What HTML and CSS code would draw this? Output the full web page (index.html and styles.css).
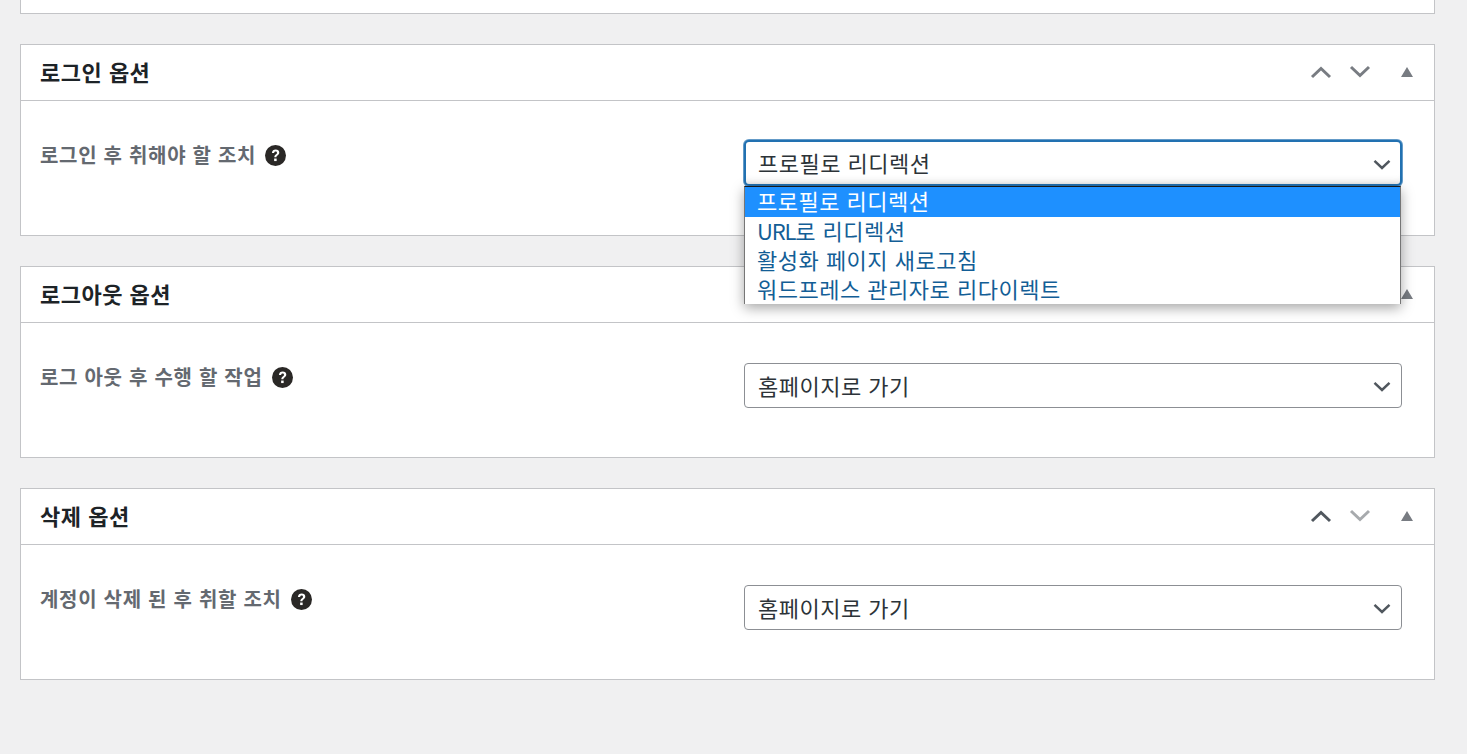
FILE: index.html
```html
<!DOCTYPE html>
<html lang="ko">
<head>
<meta charset="UTF-8" />
<title>옵션</title>
<link rel="stylesheet" href="styles.css">
</head>
<body>

<svg class="defs" width="0" height="0">
  <symbol id="up" viewBox="0 0 24 14"><path d="M3 12 L12 3.5 L21 12" fill="none" stroke="currentColor" stroke-width="3"/></symbol>
  <symbol id="down" viewBox="0 0 24 14"><path d="M3 2 L12 10.5 L21 2" fill="none" stroke="currentColor" stroke-width="3"/></symbol>
  <symbol id="tri" viewBox="0 0 12 10"><path d="M6 0 L12 10 L0 10 Z" fill="currentColor"/></symbol>
  <symbol id="help" viewBox="0 0 20 20">
    <circle cx="10" cy="10" r="10" fill="#2a2826"/>
    <path d="M6.6 7.6 C6.7 5.4 8.2 4.3 10.2 4.3 C12.2 4.3 13.6 5.5 13.6 7.2 C13.6 8.5 12.9 9.2 11.9 9.9 C11.1 10.5 10.9 10.8 10.9 11.7 L8.9 11.7 C8.9 10.3 9.3 9.7 10.3 9 C11.1 8.4 11.4 8.1 11.4 7.4 C11.4 6.6 10.9 6.1 10.1 6.1 C9.2 6.1 8.7 6.7 8.7 7.6 Z" fill="#fff"/>
    <rect x="8.7" y="12.9" width="2.4" height="2.4" fill="#fff"/>
  </symbol>
</svg>

<div class="page">
  <div class="panel panel-stub"></div>

  <section class="panel">
    <header class="panel-head">
      <h2>로그인 옵션</h2>
      <div class="panel-actions">
        <svg class="arrow"><use href="#up"/></svg>
        <svg class="arrow"><use href="#down"/></svg>
        <svg class="toggle"><use href="#tri"/></svg>
      </div>
    </header>
    <div class="panel-body">
      <div class="field-label">로그인 후 취해야 할 조치 <svg class="help"><use href="#help"/></svg></div>
      <div class="select-wrap">
        <div class="select select-open">프로필로 리디렉션 <svg class="chevron"><use href="#down"/></svg></div>
        <ul class="dropdown">
          <li class="selected">프로필로 리디렉션</li>
          <li><span class="latin">URL</span>로 리디렉션</li>
          <li>활성화 페이지 새로고침</li>
          <li>워드프레스 관리자로 리다이렉트</li>
        </ul>
      </div>
    </div>
  </section>

  <section class="panel">
    <header class="panel-head">
      <h2>로그아웃 옵션</h2>
      <div class="panel-actions">
        <svg class="arrow"><use href="#up"/></svg>
        <svg class="arrow"><use href="#down"/></svg>
        <svg class="toggle"><use href="#tri"/></svg>
      </div>
    </header>
    <div class="panel-body">
      <div class="field-label">로그 아웃 후 수행 할 작업 <svg class="help"><use href="#help"/></svg></div>
      <div class="select-wrap">
        <div class="select">홈페이지로 가기 <svg class="chevron"><use href="#down"/></svg></div>
      </div>
    </div>
  </section>

  <section class="panel">
    <header class="panel-head">
      <h2>삭제 옵션</h2>
      <div class="panel-actions">
        <svg class="arrow arrow-dark"><use href="#up"/></svg>
        <svg class="arrow arrow-off"><use href="#down"/></svg>
        <svg class="toggle"><use href="#tri"/></svg>
      </div>
    </header>
    <div class="panel-body">
      <div class="field-label">계정이 삭제 된 후 취할 조치 <svg class="help"><use href="#help"/></svg></div>
      <div class="select-wrap">
        <div class="select">홈페이지로 가기 <svg class="chevron"><use href="#down"/></svg></div>
      </div>
    </div>
  </section>
</div>

</body>
</html>
```

FILE: styles.css
```css
* {
  box-sizing: border-box;
}
html, body {
  height: 100%;
}
body {
  margin: 0;
  background: #f0f0f1;
  overflow: hidden;
  font-family: "Noto Sans CJK KR", "Noto Sans", sans-serif;
  color: #2c3338;
}
.defs {
  position: absolute;
}
.page {
  display: flex;
  flex-direction: column;
  gap: 30px;
  padding: 0 32px 0 20px;
}
.panel {
  background: #fff;
  border: 1px solid #c3c4c7;
  height: 192px;
}
.panel-stub {
  height: 14px;
  border-top: 0;
}
.panel-head {
  display: flex;
  align-items: center;
  justify-content: space-between;
  height: 56px;
  padding: 0 21px 0 19px;
  border-bottom: 1px solid #c3c4c7;
}
.panel-head h2 {
  margin: 0 0 2px;
  font-size: 22px;
  font-weight: 700;
  letter-spacing: 0.5px;
  line-height: 1.4;
  color: #1d2327;
}
.panel-actions {
  display: flex;
  align-items: center;
  padding-bottom: 2px;
}
.arrow {
  width: 24px;
  height: 14px;
  margin-right: 15px;
  color: #787c82;
}
.arrow-dark {
  color: #50575e;
}
.arrow-off {
  color: #a7aaad;
}
.toggle {
  width: 12px;
  height: 10px;
  margin-left: 14px;
  color: #787c82;
}
.panel-body {
  display: flex;
  padding: 39px 32px 0 19px;
}
.field-label {
  display: flex;
  align-items: center;
  gap: 9px;
  width: 704px;
  height: 28px;
  font-size: 20px;
  font-weight: 700;
  letter-spacing: 0.7px;
  color: #646970;
}
.help {
  width: 21px;
  height: 21px;
  margin-top: 3px;
}
.select-wrap {
  position: relative;
  width: 658px;
}
.select {
  display: flex;
  align-items: center;
  justify-content: space-between;
  height: 45px;
  margin-top: 1px;
  padding: 0 9px 2px 13px;
  border: 1px solid #8c8f94;
  border-radius: 4px;
  background: #fff;
  font-size: 22px;
  letter-spacing: 0.5px;
  color: #2c3338;
}
.select-open {
  height: 46px;
  margin-top: 0;
  border: 2px solid #2271b1;
  border-radius: 5px;
  padding-left: 12px;
  padding-right: 8px;
  box-shadow: 0 0 0 1px rgba(34, 113, 177, 0.7), inset 0 -8px 8px -8px rgba(0, 0, 0, 0.15);
}
.chevron {
  width: 20px;
  height: 12px;
  margin-top: 5px;
  color: #50575e;
}
.dropdown {
  position: absolute;
  top: 46px;
  left: 0;
  width: 657px;
  margin: 0;
  padding: 0;
  list-style: none;
  background: #fff;
  border-top: 1px solid #1a1a1a;
  border-left: 1px solid #767676;
  border-right: 1px solid #767676;
  box-shadow: 0 4px 12px rgba(0, 0, 0, 0.35);
  font-size: 22px;
  letter-spacing: 0.5px;
  line-height: 27px;
  color: #135e96;
}
.dropdown li {
  height: 29px;
  padding-left: 12px;
  white-space: nowrap;
}
.dropdown li.selected {
  height: 30px;
  background: #1e90ff;
  color: #fff;
}
.latin {
  letter-spacing: -1.2px;
}
```
